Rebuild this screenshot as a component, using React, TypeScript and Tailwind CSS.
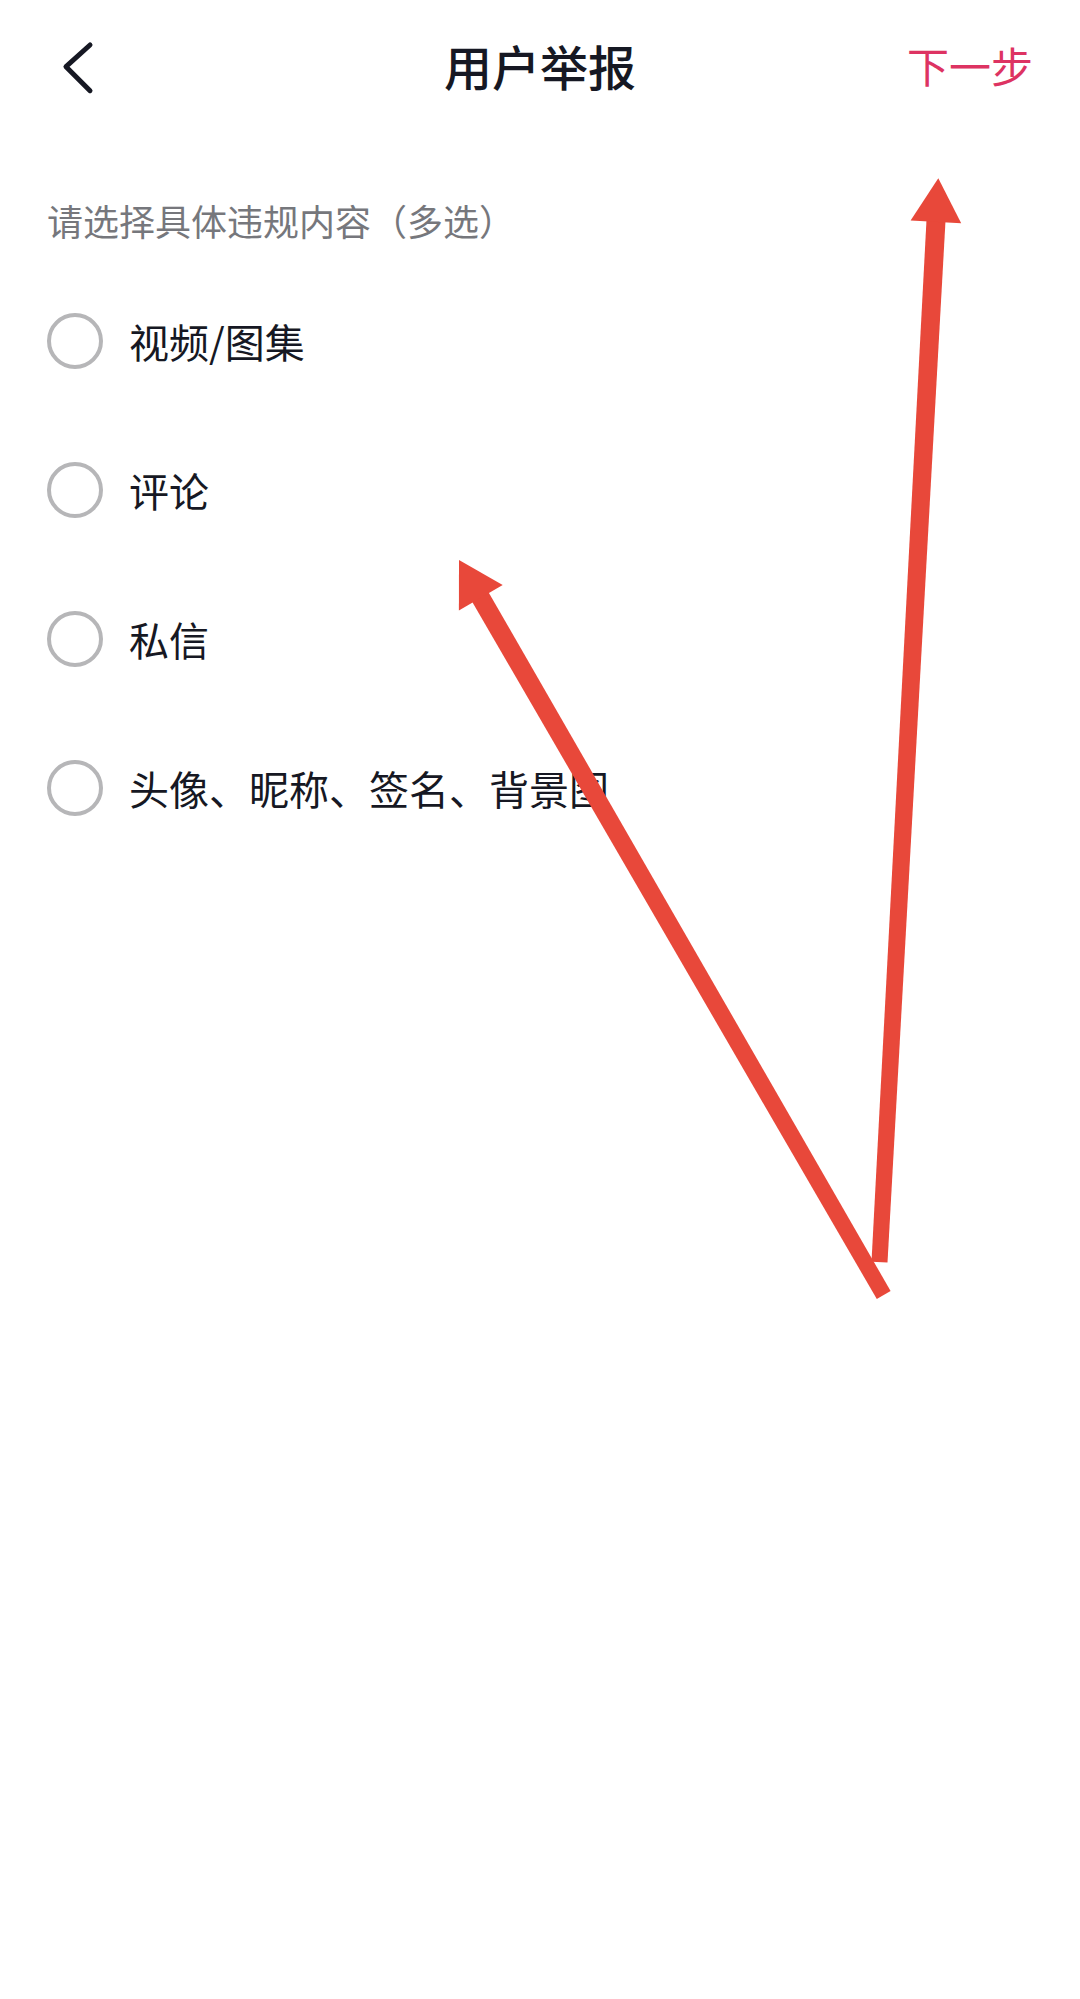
import React from "react";

const options = ["视频/图集", "评论", "私信", "头像、昵称、签名、背景图"];

function Arrows() {
  // red annotation arrows drawn over the screenshot
  return (
    <svg
      className="pointer-events-none absolute left-0 top-0"
      width="1080"
      height="1999"
      viewBox="0 0 1080 1999"
    >
      <g fill="#e8483a">
        <polygon points="945.7,217.3 887.5,1262.6 871.5,1261.8 926.7,216.3" />
        <polygon points="938.3,178.3 961.2,223.2 910.6,220.4" />
        <polygon points="486.5,588.7 890.6,1291 876.8,1299 470.1,598.2" />
        <polygon points="459,560 502.7,585.1 458.9,610.4" />
      </g>
    </svg>
  );
}

export default function App() {
  return (
    <div className="relative min-h-[1999px] w-[1080px] bg-white font-['Noto_Sans_CJK_SC',sans-serif] text-[#161823]">
      <div className="grid h-[136px] grid-cols-[1fr_auto_1fr] items-center">
        <div className="flex items-center">
          <svg
            className="ml-[54px]"
            width="48"
            height="64"
            viewBox="0 0 48 64"
            fill="none"
            stroke="#161823"
            strokeWidth="5"
            strokeLinecap="round"
            strokeLinejoin="round"
          >
            <path d="M36 9 L12 30.7 L36 54.7" />
          </svg>
        </div>
        <h1 className="mb-[6px] text-[48px] font-medium leading-[60px]">用户举报</h1>
        <div className="mb-[6px] flex justify-end pr-[47px]">
          <span className="text-[42px] leading-[56px] text-[#dd3362]">下一步</span>
        </div>
      </div>

      <p className="mt-[59px] pl-[47px] text-[36px] leading-[50px] text-[#76777c]">
        请选择具体违规内容（多选）
      </p>

      <ul className="mt-[21px]">
        {options.map((label) => (
          <li key={label} className="flex h-[149px] items-center">
            <span className="ml-[47px] h-[56px] w-[56px] shrink-0 rounded-full border-[4px] border-[#b6b6b8]" />
            <span className="ml-[26px] text-[40px] leading-[56px]">{label}</span>
          </li>
        ))}
      </ul>

      <Arrows />
    </div>
  );
}
